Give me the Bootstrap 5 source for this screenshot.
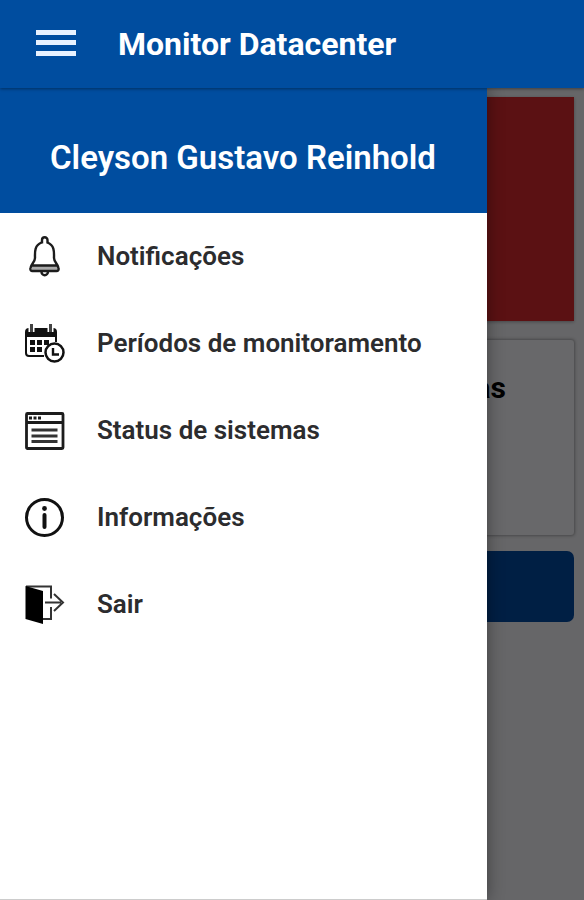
<!DOCTYPE html>
<html lang="pt-BR">
<head>
<meta charset="utf-8">
<meta name="viewport" content="width=device-width, initial-scale=1">
<title>Monitor Datacenter</title>
<link href="https://cdn.jsdelivr.net/npm/bootstrap@5.3.0/dist/css/bootstrap.min.css" rel="stylesheet">
<style>
  body { font-family: Roboto, "Liberation Sans", sans-serif; background: #666668; color: #2c2c2e; }
  .app-bar { height: 88px; padding: 0 36px; gap: 42px; background: #004d9f; box-shadow: 0 1px 3px rgba(0, 0, 0, .4); z-index: 3; }
  .app-title { font-size: 32px; line-height: 40px; font-weight: 700; }
  .menu-toggle svg { width: 40px; height: 28px; }
  .dashboard { padding: 9px 10px; }
  .alert-panel { height: 224px; background: #5b1113; box-shadow: 0 1px 3px rgba(0, 0, 0, .3); }
  .status-panel { height: 195px; margin-top: 19px; padding: 28px 68px; border-radius: 3px; background: #68686a; box-shadow: 0 0 3px 1px rgba(0, 0, 0, .3); }
  .status-panel h2 { font-size: 30px; line-height: 40px; font-weight: 700; color: #000; }
  .action-button { height: 71px; margin-top: 16px; border-radius: 7px; background: #001f44; }
  .drawer { width: calc(100% - 97px); background: #fff; border-bottom: 1px solid #ccc; box-shadow: 0 0 16px rgba(0, 0, 0, .4); z-index: 2; }
  .drawer-head { height: 125px; padding: 14px 50px 0; background: #004d9f; }
  .drawer-head h2 { font-size: 33px; line-height: 40px; font-weight: 600; }
  .drawer-link { height: 87px; padding: 0 24px; gap: 32px; font-size: 26px; line-height: 32px; font-weight: 600; color: #2c2c2e; }
  .drawer-link span { padding-bottom: 2px; }
  .drawer-link svg { width: 41px; height: 41px; flex: none; }
</style>
</head>
<body>
<div class="d-flex flex-column min-vh-100">
  <header class="app-bar d-flex align-items-center position-relative text-white">
    <button class="menu-toggle btn border-0 p-0 d-flex" type="button" aria-label="Menu">
      <svg viewBox="0 0 40 28" fill="#e8f2ff"><path d="M0 0h40v5H0zM0 10h40v5H0zM0 21h40v5H0z"/></svg>
    </button>
    <h1 class="app-title mb-0 text-nowrap">Monitor Datacenter</h1>
  </header>

  <div class="position-relative flex-grow-1 d-flex flex-column">
    <main class="dashboard flex-grow-1">
      <section class="alert-panel"></section>
      <section class="status-panel text-end"><h2 class="mb-0">Sistemas</h2></section>
      <button class="action-button btn w-100 border-0 d-block" type="button" aria-label="Abrir"></button>
    </main>

    <aside class="drawer position-absolute top-0 bottom-0 start-0">
      <div class="drawer-head d-flex align-items-center text-white">
        <h2 class="mb-0 text-nowrap">Cleyson Gustavo Reinhold</h2>
      </div>
      <nav aria-label="Principal">
        <a class="drawer-link d-flex align-items-center text-decoration-none" href="#notificacoes">
          <svg viewBox="0 0 41 41" fill="none" stroke="#1c1c1c" stroke-width="2.4">
            <path d="M8 32h26" stroke="#aaa" stroke-width="4"/>
            <path d="M17.500 6.500C10 9.500 11 17 11 22c0 4-4 6-4.500 10-.5 2 .5 3 2 3h24c1.500 0 2.500-1 2-3-.5-4-4.500-6-4.500-10 0-5 1-12.500-6.500-15.500M8 29.500h26" stroke-linejoin="round"/>
            <path d="M18 7.500V4a2.750 2.750 0 0 1 5.500 0v3.500M17.500 36a3.200 3.200 0 0 0 6.400 0"/>
          </svg>
          <span>Notificações</span>
        </a>
        <a class="drawer-link d-flex align-items-center text-decoration-none" href="#periodos">
          <svg viewBox="0 0 41 41" fill="none" stroke="#111" stroke-width="2">
            <path d="M20 33H5a3 3 0 0 1-3-3V9a3 3 0 0 1 3-3h24a3 3 0 0 1 3 3v10"/>
            <path d="M2 7h30v7H2z" fill="#111" stroke="none"/>
            <path d="M7.500 2v7M26.500 2v7" stroke="#fff" stroke-width="6"/>
            <path d="M7.500 1v8M26.500 1v8" stroke="#444" stroke-width="3"/>
            <path d="M6 17h5v5H6zM13 17h5v5h-5zM20 17h5v5h-5zM6 24h5v5H6zM13 24h5v5h-5z" fill="#111" stroke="none"/>
            <circle cx="30.500" cy="29.500" r="9" fill="#fff" stroke-width="2.500"/>
            <path d="M29 25v6.500h6" stroke-width="2.400"/>
          </svg>
          <span>Períodos de monitoramento</span>
        </a>
        <a class="drawer-link d-flex align-items-center text-decoration-none" href="#status">
          <svg viewBox="0 0 41 41" fill="none" stroke="#1c1c1c" stroke-width="2.8">
            <rect x="2.500" y="3.500" width="36.500" height="35" rx="1"/>
            <path d="M2 12.500h37"/>
            <path d="M5 8h13" stroke-dasharray="3 1.500"/>
            <path d="M7.500 20h26M7.500 26h26M7.500 31.500h26" stroke-width="2.800" stroke="#333"/>
          </svg>
          <span>Status de sistemas</span>
        </a>
        <a class="drawer-link d-flex align-items-center text-decoration-none" href="#informacoes">
          <svg viewBox="0 0 41 41" fill="none" stroke="#111" stroke-width="3">
            <circle cx="20.500" cy="20.500" r="18"/>
            <path d="M20.500 18v12" stroke-width="4" stroke-linecap="round"/>
            <circle cx="20.500" cy="11.500" r="2.400" fill="#111" stroke="none"/>
          </svg>
          <span>Informações</span>
        </a>
        <a class="drawer-link d-flex align-items-center text-decoration-none" href="#sair">
          <svg viewBox="0 0 41 41" fill="none" stroke="#333" stroke-width="2">
            <path d="M2 2.500h25v12M27 23v12h-8M21 18.500h16M30 10l9 8.500-9 8.500"/>
            <path d="M1.500 2 19 7v33L1.500 35z" fill="#000" stroke="none"/>
          </svg>
          <span>Sair</span>
        </a>
      </nav>
    </aside>
  </div>
</div>
<script src="https://cdn.jsdelivr.net/npm/bootstrap@5.3.0/dist/js/bootstrap.bundle.min.js"></script>
</body>
</html>
